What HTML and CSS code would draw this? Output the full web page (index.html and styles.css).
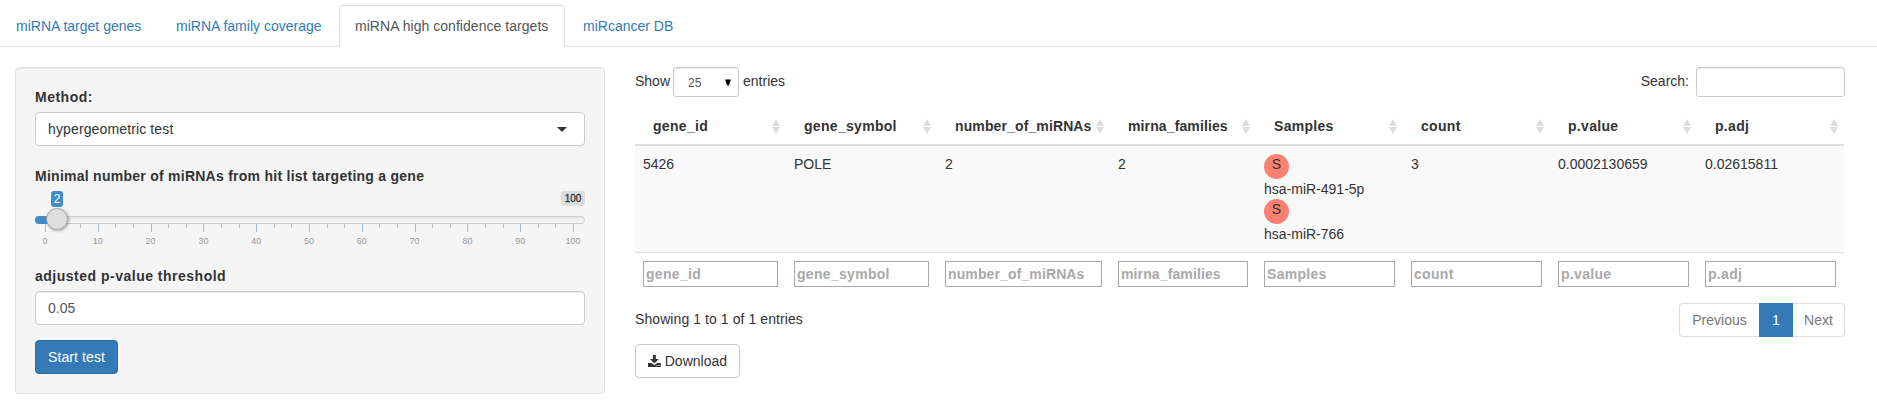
FILE: index.html
```
<!DOCTYPE html>
<html lang="en">
<head>
<meta charset="utf-8">
<title>miRNA high confidence targets</title>
<link rel="stylesheet" href="styles.css">
</head>
<body>
<nav class="tabs">
  <a class="tab">miRNA target genes</a>
  <a class="tab coverage">miRNA family coverage</a>
  <a class="tab active">miRNA high confidence targets</a>
  <a class="tab">miRcancer DB</a>
</nav>
<main class="layout">
  <section class="well">
    <label class="label wide">Method:</label>
    <div class="control picker"><span>hypergeometric test</span><i class="caret"></i></div>
    <label class="label slider-label">Minimal number of miRNAs from hit list targeting a gene</label>
    <div class="slider">
      <div class="track"></div>
      <div class="fill"></div>
      <span class="max">100</span>
      <span class="current">2</span>
      <div class="grid" id="grid"></div>
      <div class="handle"></div>
    </div>
    <label class="label wide">adjusted p-value threshold</label>
    <input class="control" value="0.05">
    <button class="btn primary">Start test</button>
  </section>
  <section class="results">
    <div class="toolbar">
      <div class="length">Show <span class="small-select">25<svg width="6" height="7" viewBox="0 0 6 7"><path d="M0 .5h6L3.800 6.500H2.200z"/></svg></span> entries</div>
      <div class="search">Search:<input class="search-input"></div>
    </div>
    <table class="table">
      <colgroup><col class="c151"><col class="c151"><col class="c173"><col class="c146"><col class="c147"><col class="c147"><col class="c147"><col class="c147"></colgroup>
      <thead><tr>
        <th><div class="head">gene_id<i class="sort"></i></div></th>
        <th><div class="head">gene_symbol<i class="sort"></i></div></th>
        <th><div class="head tight">number_of_miRNAs<i class="sort"></i></div></th>
        <th><div class="head tight">mirna_families<i class="sort"></i></div></th>
        <th><div class="head">Samples<i class="sort"></i></div></th>
        <th><div class="head">count<i class="sort"></i></div></th>
        <th><div class="head">p.value<i class="sort"></i></div></th>
        <th><div class="head">p.adj<i class="sort"></i></div></th>
      </tr></thead>
      <tbody><tr>
        <td>5426</td><td>POLE</td><td>2</td><td>2</td>
        <td><div class="dot">S</div><div>hsa-miR-491-5p</div><div class="dot">S</div><div>hsa-miR-766</div></td>
        <td>3</td><td>0.0002130659</td><td>0.02615811</td>
      </tr></tbody>
      <tfoot><tr>
        <td><input placeholder="gene_id"></td>
        <td><input placeholder="gene_symbol"></td>
        <td><input class="tight" placeholder="number_of_miRNAs"></td>
        <td><input class="tight" placeholder="mirna_families"></td>
        <td><input placeholder="Samples"></td>
        <td><input placeholder="count"></td>
        <td><input placeholder="p.value"></td>
        <td><input placeholder="p.adj"></td>
      </tr></tfoot>
    </table>
    <div class="footer">
      <div class="info">Showing 1 to 1 of 1 entries</div>
      <div class="pages"><span class="page prev">Previous</span><span class="page on">1</span><span class="page next">Next</span></div>
    </div>
    <button class="btn download"><svg width="13" height="12" viewBox="0 0 13 12"><path d="M5 0h3v4h3L6.5 8.500 2 4h3z"/><path fill-rule="evenodd" d="M0 8h3.700l2.800 2.300L9.300 8H13v4H0zM8.500 10v1h1v-1zM10.800 10v1h1v-1z"/></svg>Download</button>
  </section>
</main>
<script src="slider.js"></script>
</body>
</html>
```
FILE: slider.js
```
// Build the slider scale: a major tick every 10, two minor ticks between.
const grid = document.getElementById('grid');
for (let i = 0; i <= 30; i++) {
  const tick = document.createElement('i');
  const major = i % 3 === 0;
  tick.className = major ? 'tick major' : 'tick';
  tick.style.left = (i / 30 * 100) + '%';
  if (major) {
    const text = document.createElement('span');
    text.className = 'tick-text';
    text.textContent = String(i / 3 * 10);
    tick.appendChild(text);
  }
  grid.appendChild(tick);
}
```
FILE: styles.css
```
* { box-sizing: border-box; }
body { margin: 0; background: #fff; color: #333; font: 14px/20px "Liberation Sans", Arial, sans-serif; }
input, button { font: inherit; }

.tabs { display: flex; gap: 2px; height: 47px; padding-top: 5px; border-bottom: 1px solid #ddd; }
.tab { height: 42px; padding: 10px 15px; border: 1px solid transparent; border-radius: 4px 4px 0 0; color: #337ab7; white-space: nowrap; }
.tab:first-child { width: 158px; }
.tab.coverage { width: 177px; }
.tab.active { width: 226px; color: #555; background: #fff; border-color: #ddd #ddd #fff; letter-spacing: .04px; }

.layout { display: flex; align-items: flex-start; gap: 30px; padding: 20px 33px 0 15px; }
.well { width: 590px; height: 327px; padding: 19px; border: 1px solid #e3e3e3; border-radius: 4px; background: #f5f5f5; box-shadow: inset 0 1px 1px rgba(0,0,0,.05); }
.label { display: block; margin-bottom: 5px; font-weight: bold; letter-spacing: .26px; }
.label.wide { letter-spacing: .5px; }
.control { display: block; width: 100%; height: 34px; padding: 6px 12px; border: 1px solid #ccc; border-radius: 4px; background: #fff; color: #555; outline: 0; box-shadow: inset 0 1px 1px rgba(0,0,0,.075); }
.picker { display: flex; justify-content: space-between; align-items: center; padding-right: 17px; margin-bottom: 20px; color: #333; letter-spacing: .13px; box-shadow: none; }
.caret { border: 5px solid transparent; border-top-color: #333; border-bottom: 0; }
.slider-label { margin-bottom: 0; }

.slider { position: relative; height: 80px; font-size: 12px; line-height: 16px; }
.track { position: absolute; left: 0; right: 0; top: 30px; height: 8px; border: 1px solid #ccc; border-radius: 8px; background: linear-gradient(#dedede -50%, #fff 150%); }
.fill { position: absolute; left: 0; top: 30px; width: 20px; height: 8px; border-radius: 8px 0 0 8px; background: #428bca; }
.current { position: absolute; left: 16px; top: 5px; width: 12px; height: 16px; border-radius: 3px; background: #428bca; color: #fff; text-align: center; }
.max { position: absolute; right: 0; top: 5px; width: 24px; height: 15px; border-radius: 3px; background: #ddd; color: #333; font-size: 10px; line-height: 15px; text-align: center; -webkit-text-stroke: .3px #333; }
.handle { position: absolute; left: 11px; top: 22px; width: 22px; height: 22px; border: 1px solid #aaa; border-radius: 50%; background: #dedede; box-shadow: 1px 1px 3px rgba(0,0,0,.3); }
.grid { position: absolute; left: 10px; right: 12px; top: 38px; }
.tick { position: absolute; top: 0; width: 1px; height: 4px; background: #bbb; }
.tick.major { height: 8px; background: #99bfdf; }
.tick-text { position: absolute; left: -15px; top: 11px; width: 30px; color: #999; font: 9px/12px "Liberation Sans", Arial, sans-serif; text-align: center; }

.btn { display: flex; align-items: center; height: 34px; padding: 0 12px; border: 1px solid #ccc; border-radius: 4px; background: #fff; color: #333; white-space: nowrap; }
.primary { width: 83px; margin-top: 15px; background: #337ab7; border-color: #2e6da4; color: #fff; letter-spacing: .1px; }
.download { width: 105px; margin-top: 7px; gap: 4px; }
.download svg { fill: #333; }

.results { width: 1209px; flex: none; }
.toolbar { display: flex; justify-content: space-between; height: 30px; }
.length, .search { display: flex; align-items: center; gap: 4px; height: 28px; }
.length { gap: 0; }
.small-select { display: flex; align-items: center; justify-content: space-between; width: 66px; height: 30px; margin: 2px 4px 0 3px; padding: 2px 7px 0 14px; border: 1px solid #ccc; border-radius: 3px; color: #555; font-size: 12px; box-shadow: inset 0 1px 1px rgba(0,0,0,.075); }
.small-select svg { margin-bottom: 2px; fill: #000; }
.search { gap: 7px; margin-right: -1px; }
.search-input { width: 149px; height: 30px; margin-top: 2px; border: 1px solid #ccc; border-radius: 3px; outline: 0; box-shadow: inset 0 1px 1px rgba(0,0,0,.075); }

.table { width: 1209px; margin-top: 11px; border-spacing: 0; table-layout: fixed; }
.c151 { width: 151px; }
.c173 { width: 173px; }
.c146 { width: 146px; }
.c147 { width: 147px; }
.table th { height: 38px; padding: 0; border-bottom: 2px solid #ddd; text-align: left; letter-spacing: .3px; }
.head { display: flex; align-items: center; justify-content: space-between; padding: 0 6px 0 18px; height: 36px; }
.sort { display: flex; flex-direction: column; gap: 1px; }
.sort::before, .sort::after { content: ""; border: 4px solid transparent; }
.sort::before { border-bottom: 7px solid #ddd; border-top: 0; }
.sort::after { border-top: 7px solid #ddd; border-bottom: 0; }
.table td { padding: 8px; vertical-align: top; }
.table tbody td { background: #f9f9f9; height: 106px; }
.table tfoot td { border-top: 1px solid #ddd; }
.table input { display: block; width: 100%; height: 26px; padding: 1px 2px; border: 1px solid #a9a9a9; font-weight: bold; letter-spacing: .3px; outline: 0; }
.table input::placeholder { color: #a9a9a9; opacity: 1; }
.table .tight { letter-spacing: .12px; }
.dot { width: 25px; height: 25px; border-radius: 50%; background: salmon; text-align: center; }

.footer { display: flex; justify-content: space-between; margin-top: 8px; height: 34px; }
.info { padding-top: 6px; letter-spacing: .08px; }
.pages { display: flex; margin-right: -1px; }
.page { height: 34px; padding: 6px 0; border: 1px solid #ddd; color: #777; text-align: center; }
.prev { width: 80px; border-right: 0; border-radius: 4px 0 0 4px; }
.on { width: 34px; border-color: #337ab7; background: #337ab7; color: #fff; }
.next { width: 52px; border-left: 0; border-radius: 0 4px 4px 0; }
```
